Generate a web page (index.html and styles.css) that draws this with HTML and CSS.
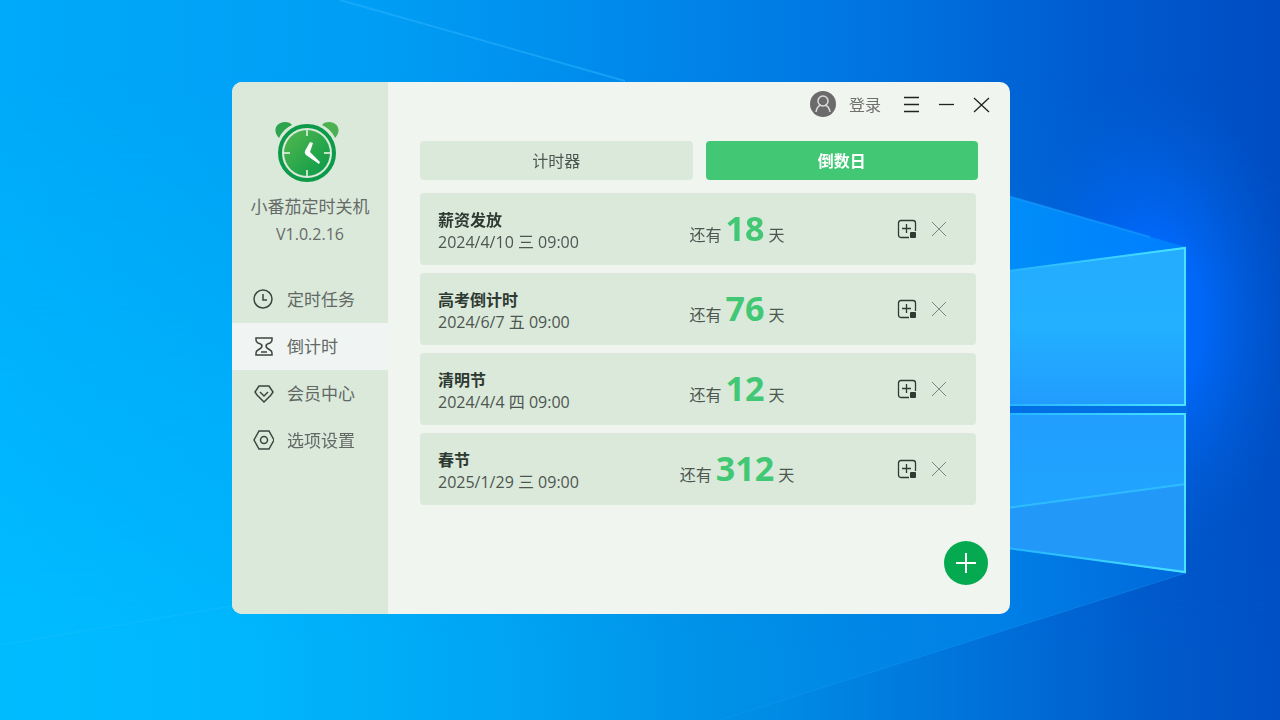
FILE: index.html
```html
<!DOCTYPE html>
<html lang="zh-CN">
<head>
  <meta charset="UTF-8" />
  <title>小番茄定时关机</title>
  <link rel="stylesheet" href="styles.css">
</head>
<body>
  <svg class="wallpaper" viewBox="0 0 1280 720" preserveAspectRatio="none" aria-hidden="true">
    <defs>
      <linearGradient id="sky" x1="0" y1="0" x2="1" y2="0">
        <stop offset="0" stop-color="#00aafa" />
        <stop offset="0.3" stop-color="#009df4" />
        <stop offset="0.5" stop-color="#0088ea" />
        <stop offset="0.7" stop-color="#0072e0" />
        <stop offset="0.85" stop-color="#005cd0" />
        <stop offset="1" stop-color="#004cc2" />
      </linearGradient>
      <linearGradient id="floor" x1="0" y1="0" x2="1" y2="0">
        <stop offset="0" stop-color="#00bcff" />
        <stop offset="0.2" stop-color="#00b6fc" />
        <stop offset="0.4" stop-color="#00a4f2" />
        <stop offset="0.6" stop-color="#008ce6" />
        <stop offset="0.8" stop-color="#006cd6" />
        <stop offset="0.9" stop-color="#005aca" />
        <stop offset="1" stop-color="#0050c4" />
      </linearGradient>
      <linearGradient id="fade" x1="0" y1="0" x2="0" y2="1">
        <stop offset="0.1" stop-color="#000" />
        <stop offset="0.9" stop-color="#fff" />
      </linearGradient>
      <mask id="lower"><rect width="1280" height="720" fill="url(#fade)" /></mask>
      <radialGradient id="glow" gradientUnits="userSpaceOnUse" cx="0" cy="0" r="1" gradientTransform="translate(1150 320) scale(150 240)">
        <stop offset="0" stop-color="#006eff" />
        <stop offset="0.35" stop-color="#006aff" stop-opacity="0.85" />
        <stop offset="0.7" stop-color="#0066f0" stop-opacity="0.35" />
        <stop offset="1" stop-color="#0060e0" stop-opacity="0" />
      </radialGradient>
      <linearGradient id="beam" gradientUnits="userSpaceOnUse" x1="900" y1="0" x2="1186" y2="0">
        <stop offset="0" stop-color="#00a0ff" stop-opacity="0.35" />
        <stop offset="0.4" stop-color="#0094ff" stop-opacity="0.85" />
        <stop offset="1" stop-color="#0084ff" stop-opacity="0.8" />
      </linearGradient>
      <linearGradient id="beamLow" gradientUnits="userSpaceOnUse" x1="720" y1="0" x2="1186" y2="0">
        <stop offset="0" stop-color="#00a0f4" stop-opacity="0" />
        <stop offset="0.6" stop-color="#0088ec" stop-opacity="0.7" />
        <stop offset="1" stop-color="#0070e4" stop-opacity="0.7" />
      </linearGradient>
      <linearGradient id="paneTop" x1="0" y1="0" x2="0" y2="1">
        <stop offset="0" stop-color="#25acff" />
        <stop offset="0.5" stop-color="#22b0ff" />
        <stop offset="1" stop-color="#229cff" />
      </linearGradient>
      <linearGradient id="paneLow" x1="0" y1="0" x2="0" y2="1">
        <stop offset="0" stop-color="#219eff" />
        <stop offset="1" stop-color="#20a8ff" />
      </linearGradient>
      <linearGradient id="edge" gradientUnits="userSpaceOnUse" x1="1010" y1="0" x2="1186" y2="0">
        <stop offset="0" stop-color="#25b4ff" />
        <stop offset="1" stop-color="#48e4ff" />
      </linearGradient>
      <symbol id="pin" viewBox="0 0 20 20">
        <path d="M12 18.5H4Q1.5 18.5 1.5 16V4Q1.5 1.5 4 1.5H16Q18.5 1.5 18.5 4V12M9.500 5V14M5 9.500H14" />
        <rect x="13" y="13" width="6" height="6" rx="1" fill="#2f3b32" stroke="none" />
      </symbol>
      <symbol id="cross" viewBox="0 0 14 14">
        <path d="M0 0L14 14M14 0L0 14" />
      </symbol>
    </defs>
    <rect width="1280" height="720" fill="url(#sky)" />
    <rect width="1280" height="720" fill="url(#floor)" mask="url(#lower)" />
    <path d="M340 0L625 81" stroke="#2bb4ff" stroke-width="2" opacity="0.5" />
    <path d="M0 645L232 606" stroke="#2bc8ff" opacity="0.3" />
    <ellipse cx="1150" cy="320" rx="150" ry="240" fill="url(#glow)" />
    <path d="M900 165L1186 247V405H900Z" fill="url(#beam)" />
    <path d="M900 165L1150 237" stroke="#1aa2ff" stroke-width="2" opacity="0.5" />
    <path d="M900 535L1000 547L1186 573L720 720V614Z" fill="url(#beamLow)" />
    <path d="M1186 573L720 720" stroke="#1a98f4" opacity="0.4" />
    <path d="M1000 405H1187V414H1000Z" fill="#0070e4" />
    <path d="M1000 272L1186 247V405H1000Z" fill="url(#paneTop)" />
    <path d="M1000 414H1186V573L1000 547Z" fill="url(#paneLow)" />
    <path d="M1000 509L1186 484V573L1000 547Z" fill="#2299f8" />
    <path d="M1000 509L1186 484" stroke="#2fbcff" stroke-width="2" />
    <g fill="none" stroke="url(#edge)" stroke-width="2">
      <path d="M1000 272L1185 248V405M1000 405H1186M1000 414H1185V572L1000 547" />
    </g>
  </svg>

  <div class="window">
    <aside class="sidebar">
      <svg class="logo" viewBox="0 0 64 62" aria-hidden="true">
        <defs>
          <linearGradient id="face" x1="0" y1="0" x2="1" y2="1">
            <stop offset="0" stop-color="#55b84e" />
            <stop offset="1" stop-color="#07994a" />
          </linearGradient>
        </defs>
        <path d="M4 17C-3 10 1 1 10 1Q15 1 17 4Q8 8 4 17Z" fill="#2ea44e" />
        <path d="M60 17C67 10 63 1 54 1Q49 1 47 4Q56 8 60 17Z" fill="#4db051" />
        <circle cx="32" cy="32" r="27" fill="#dbe9db" stroke="#0d9a49" stroke-width="4" />
        <circle cx="32" cy="32" r="23" fill="url(#face)" />
        <path d="M32 9V15M32 49V55M9 32H15M49 32H55" stroke="#c3e3c6" stroke-width="2" />
        <path d="M35 21L38 22L35 31L45 41L44 43L31 34Q29 32 30 30Z" fill="#fff" />
      </svg>
      <h1>小番茄定时关机</h1>
      <p class="version">V1.0.2.16</p>
      <nav>
        <a href="#tasks">
          <svg viewBox="0 0 22 22"><circle cx="11" cy="11" r="9" /><path d="M11 6V12H15" /></svg>
          定时任务
        </a>
        <a href="#countdown" class="active">
          <svg viewBox="0 0 22 22"><path d="M4 3H20V5Q20 7 18 8Q14 9 14 11Q14 13 18 15Q20 16 20 18V20H4V18Q4 16 6 15Q10 13 10 11Q10 9 6 8Q4 7 4 5ZM9 17H15" /></svg>
          倒计时
        </a>
        <a href="#member">
          <svg viewBox="0 0 22 22"><path d="M7 4H17L21 10L19 13L12 20L5 13L3 10ZM8 10L12 14L16 10" /></svg>
          会员中心
        </a>
        <a href="#settings">
          <svg viewBox="0 0 22 22"><path d="M7 2H17L22 11L17 20H7L2 11Z" /><circle cx="12" cy="11" r="3.5" /></svg>
          选项设置
        </a>
      </nav>
    </aside>

    <main>
      <header class="titlebar">
        <button class="login">
          <svg viewBox="0 0 26 26" aria-hidden="true">
            <circle cx="13" cy="13" r="13" fill="#6b6b6b" />
            <circle cx="13" cy="10" r="5" />
            <path d="M6 21Q7 15 11 14M20 21Q19 15 15 14" />
          </svg>
          登录
        </button>
        <button aria-label="菜单"><svg viewBox="0 0 17 17"><path d="M1 1.5H16M1 8.5H16M1 15.5H16" /></svg></button>
        <button aria-label="最小化"><svg viewBox="0 0 17 17"><path d="M1 8.5H16" /></svg></button>
        <button aria-label="关闭"><svg viewBox="0 0 17 17"><path d="M1 2L16 16M16 2L1 16" /></svg></button>
      </header>

      <div class="tabs">
        <button>计时器</button>
        <button class="selected">倒数日</button>
      </div>

      <ul class="days">
        <li>
          <div class="event"><h2>薪资发放</h2><time>2024/4/10 三 09:00</time></div>
          <p class="left">还有 <strong>18</strong> 天</p>
          <div class="actions">
            <button aria-label="添加到桌面"><svg><use href="#pin" /></svg></button>
            <button class="remove" aria-label="删除"><svg><use href="#cross" /></svg></button>
          </div>
        </li>
        <li>
          <div class="event"><h2>高考倒计时</h2><time>2024/6/7 五 09:00</time></div>
          <p class="left">还有 <strong>76</strong> 天</p>
          <div class="actions">
            <button aria-label="添加到桌面"><svg><use href="#pin" /></svg></button>
            <button class="remove" aria-label="删除"><svg><use href="#cross" /></svg></button>
          </div>
        </li>
        <li>
          <div class="event"><h2>清明节</h2><time>2024/4/4 四 09:00</time></div>
          <p class="left">还有 <strong>12</strong> 天</p>
          <div class="actions">
            <button aria-label="添加到桌面"><svg><use href="#pin" /></svg></button>
            <button class="remove" aria-label="删除"><svg><use href="#cross" /></svg></button>
          </div>
        </li>
        <li>
          <div class="event"><h2>春节</h2><time>2025/1/29 三 09:00</time></div>
          <p class="left">还有 <strong>312</strong> 天</p>
          <div class="actions">
            <button aria-label="添加到桌面"><svg><use href="#pin" /></svg></button>
            <button class="remove" aria-label="删除"><svg><use href="#cross" /></svg></button>
          </div>
        </li>
      </ul>

      <button class="add" aria-label="新增"><svg viewBox="0 0 22 22"><path d="M11 1V21M1 11H21" /></svg></button>
    </main>
  </div>
</body>
</html>
```
FILE: styles.css
```css
* {
  box-sizing: border-box;
}
body {
  margin: 0;
  min-height: 100vh;
  font-family: "Open Sans", "Noto Sans CJK SC", sans-serif;
  font-size: 16px;
  color: #4d5650;
  background-color: #0090f0;
}
h1, h2, p, ul {
  margin: 0;
  padding: 0;
}
button {
  padding: 0;
  border: none;
  background: none;
  font: inherit;
  color: inherit;
  cursor: pointer;
}
svg {
  display: block;
  fill: none;
}
.wallpaper {
  position: fixed;
  inset: 0;
  width: 100%;
  height: 100%;
}
.window {
  position: absolute;
  top: 82px;
  right: 270px;
  bottom: 106px;
  left: 232px;
  display: flex;
  border-radius: 10px;
  background-color: #f0f5ef;
  overflow: hidden;
}

/* sidebar */
.sidebar {
  flex: 0 0 156px;
  padding-top: 39px;
  background-color: #dbe9db;
  text-align: center;
}
.logo {
  width: 64px;
  height: 62px;
  margin: 0 auto 12px 43px;
}
h1 {
  font-size: 17px;
  font-weight: normal;
  line-height: 24px;
  color: #666b68;
}
.version {
  margin-top: 3px;
  line-height: 24px;
  color: #666b68;
}
nav {
  margin-top: 30px;
}
nav a {
  display: flex;
  align-items: center;
  gap: 13px;
  height: 47px;
  padding: 0 0 2px 20px;
  font-size: 17px;
  color: #626864;
  text-decoration: none;
}
nav a.active {
  background-color: #f0f4f2;
}
nav svg {
  width: 22px;
  height: 22px;
  stroke: #3b463e;
  stroke-width: 1.5;
}

/* main area */
main {
  flex: 1;
  display: flex;
  flex-direction: column;
  padding: 0 32px;
}
.titlebar {
  display: flex;
  justify-content: flex-end;
  align-items: center;
  gap: 18px;
  height: 44px;
  margin-right: -12px;
}
.titlebar svg {
  width: 17px;
  height: 17px;
  stroke: #222;
  stroke-width: 1.3;
}
.titlebar .login {
  display: flex;
  align-items: center;
  gap: 13px;
  margin-right: 4px;
  color: #707070;
}
.titlebar .login svg {
  width: 26px;
  height: 26px;
  stroke: #dcdcdc;
  stroke-width: 1.5;
}
.titlebar .login circle:first-child {
  stroke: none;
}
.tabs {
  display: flex;
  gap: 13px;
  margin-top: 15px;
}
.tabs button {
  flex: 1;
  height: 39px;
  padding-bottom: 2px;
  border-radius: 4px;
  background-color: #dbe9db;
}
.tabs .selected {
  background-color: #42c874;
  color: #fff;
  font-weight: bold;
}
.days {
  display: flex;
  flex-direction: column;
  gap: 8px;
  margin: 13px 2px 0 0;
  list-style: none;
}
.days li {
  display: grid;
  grid-template-columns: 1fr 160px 129px;
  align-items: center;
  height: 72px;
  padding: 0 30px 0 18px;
  border-radius: 4px;
  background-color: #dbe9db;
}
.event {
  padding-top: 3px;
}
.event h2 {
  font-size: 16px;
  line-height: 22px;
  color: #2e3a31;
}
.event time {
  display: block;
  line-height: 22px;
}
.left {
  padding-bottom: 2px;
  text-align: center;
  white-space: nowrap;
}
.left strong {
  font-size: 34px;
  line-height: 40px;
  color: #42c874;
}
.actions {
  display: flex;
  justify-content: flex-end;
  align-items: center;
  gap: 15px;
}
.actions svg {
  width: 20px;
  height: 20px;
  stroke: #2f3b32;
  stroke-width: 1.3;
}
.actions .remove svg {
  width: 14px;
  height: 14px;
  stroke: #7b867e;
  stroke-width: 1;
}
.add {
  display: grid;
  place-items: center;
  width: 44px;
  height: 44px;
  margin: auto -10px 29px auto;
  border-radius: 50%;
  background-color: #05aa50;
}
.add svg {
  width: 22px;
  height: 22px;
  stroke: #fff;
  stroke-width: 2;
}
```
